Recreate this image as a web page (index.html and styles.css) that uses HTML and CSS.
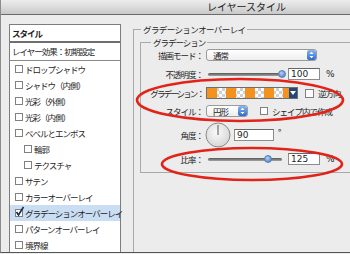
FILE: index.html
```html
<!DOCTYPE html>
<html lang="ja">
<head>
  <meta charset="UTF-8">
  <title>レイヤースタイル</title>
  <link rel="stylesheet" href="styles.css">
</head>
<body>
  <div class="window">
    <div class="titlebar">レイヤースタイル</div>

    <div class="main">
      <div class="styles-panel">
        <div class="panel-head">スタイル</div>
        <div class="panel-default">レイヤー効果：初期設定</div>
        <ul class="effect-list">
          <li><span class="check"></span>ドロップシャドウ</li>
          <li><span class="check"></span>シャドウ（内側）</li>
          <li><span class="check"></span>光彩（外側）</li>
          <li><span class="check"></span>光彩（内側）</li>
          <li><span class="check"></span>ベベルとエンボス</li>
          <li class="sub"><span class="check"></span>輪郭</li>
          <li class="sub"><span class="check"></span>テクスチャ</li>
          <li><span class="check"></span>サテン</li>
          <li><span class="check"></span>カラーオーバーレイ</li>
          <li class="selected">
            <span class="check">
              <svg class="tick" width="10" height="11" viewBox="0 0 10 11"><path d="M1.5 6 L3.5 9 L8.5 1" fill="none" stroke="#1b2a4a" stroke-width="1.6"/></svg>
            </span>グラデーションオーバーレイ
          </li>
          <li><span class="check"></span>パターンオーバーレイ</li>
          <li><span class="check"></span>境界線</li>
        </ul>
      </div>

      <fieldset class="group outer">
        <legend>グラデーションオーバーレイ</legend>
        <fieldset class="group inner">
          <legend>グラデーション</legend>

          <div class="row r1">
            <label>描画モード：</label>
            <div class="select mode">
              通常
              <span class="stepper"><svg width="9" height="10" viewBox="0 0 9 10"><path d="M2.5 4 L4.5 1.8 L6.5 4Z M2.5 6 L4.5 8.2 L6.5 6Z" fill="#fff"/></svg></span>
            </div>
          </div>

          <div class="row r2">
            <label>不透明度：</label>
            <div class="slider"><span class="knob" style="left: 100%"></span></div>
            <span class="field">100</span>
            <span class="unit">%</span>
          </div>

          <div class="row r3">
            <label class="tight">グラデーション：</label>
            <div class="swatch">
              <span class="ramp"></span>
              <span class="drop"><svg width="6" height="4" viewBox="0 0 6 4"><path d="M0 0 H6 L3 4Z" fill="#fff"/></svg></span>
            </div>
            <span class="check big"></span>
            <span class="opt">逆方向</span>
          </div>

          <div class="row r4">
            <label>スタイル：</label>
            <div class="select shape">
              円形
              <span class="stepper"><svg width="9" height="10" viewBox="0 0 9 10"><path d="M2.5 4 L4.5 1.8 L6.5 4Z M2.5 6 L4.5 8.2 L6.5 6Z" fill="#fff"/></svg></span>
            </div>
            <span class="check inset"></span>
            <span class="opt">シェイプ内で作成</span>
          </div>

          <div class="row r5">
            <label>角度：</label>
            <svg class="dial" width="26" height="26" viewBox="0 0 26 26">
              <defs>
                <radialGradient id="dialfill" cx="45%" cy="40%" r="60%">
                  <stop offset="0" stop-color="#fbfbfb"/>
                  <stop offset="1" stop-color="#d6d6d6"/>
                </radialGradient>
              </defs>
              <circle cx="13" cy="13" r="12" fill="url(#dialfill)" stroke="#8a8a8a"/>
              <line x1="13" y1="13" x2="13" y2="3" stroke="#555" stroke-width="1"/>
            </svg>
            <span class="field angle">90</span>
            <span class="deg">°</span>
          </div>

          <div class="row r6">
            <label>比率：</label>
            <div class="slider"><span class="knob" style="left: 81%"></span></div>
            <span class="field">125</span>
            <span class="unit">%</span>
          </div>
        </fieldset>
      </fieldset>
    </div>

    <svg class="marks" width="350" height="254" viewBox="0 0 350 254">
      <ellipse cx="240" cy="100" rx="103" ry="21" fill="none" stroke="#e2231a" stroke-width="2.6"/>
      <ellipse cx="252" cy="164" rx="90" ry="16" fill="none" stroke="#e2231a" stroke-width="2.6"/>
    </svg>
  </div>
</body>
</html>
```

FILE: styles.css
```css
* {
  box-sizing: border-box;
}

body {
  margin: 0;
  width: 350px;
  height: 254px;
  overflow: hidden;
  background: #ececec;
  font-family: "Noto Sans CJK JP", sans-serif;
  font-size: 8.5px;
  letter-spacing: -1px;
  color: #1e1e1e;
}

.window {
  position: relative;
  height: 253px;
  border-left: 1px solid #8c8c8c;
  border-bottom: 1px solid #555;
  background: #ececec;
}

.titlebar {
  height: 15px;
  padding-left: 142px;
  line-height: 14px;
  text-align: center;
  font-size: 10px;
  letter-spacing: 0;
  color: #222;
  background: linear-gradient(#ededed, #c9c9c9);
  border-bottom: 1px solid #6b6b6b;
}

.main {
  display: flex;
  height: 237px;
  padding: 9px 0 0 8px;
}

/* left list */

.styles-panel {
  width: 112px;
  flex-shrink: 0;
  background: #fff;
  border: 1px solid #7d7d7d;
  border-bottom: none;
}

.panel-head {
  height: 18px;
  padding-left: 2px;
  line-height: 16px;
  font-weight: bold;
  border-bottom: 2px solid #6f6f6f;
}

.panel-default {
  height: 18px;
  padding-left: 2px;
  line-height: 17px;
  border-bottom: 1px solid #8a8a8a;
}

.effect-list {
  list-style: none;
  margin: 0;
  padding: 0;
}

.effect-list li {
  display: flex;
  align-items: center;
  height: 16px;
  padding-left: 5px;
  white-space: nowrap;
}

.effect-list li.sub {
  padding-left: 14px;
}

.effect-list li.selected {
  background: #c9ddf3;
}

.check {
  position: relative;
  width: 8px;
  height: 8px;
  margin-right: 2px;
  flex-shrink: 0;
  background: #fff;
  border: 1px solid #808080;
}

.tick {
  position: absolute;
  left: -1px;
  top: -4px;
}

/* right side */

.group {
  margin: 0;
  padding: 0;
  min-width: 0;
  border: 1px solid #a9a9a9;
  border-right: none;
}

.group legend {
  padding: 0 2px;
  line-height: 12px;
}

.outer {
  flex: 1;
  margin: -1px 0 0 12px;
  border-bottom: none;
}

.outer > legend {
  margin-left: 7px;
  letter-spacing: -0.6px;
}

.inner {
  margin: 1px 0 0 6px;
  padding-bottom: 2px;
}

.inner > legend {
  margin-left: 10px;
}

.row {
  display: flex;
  align-items: center;
}

.r1 { height: 14px; }
.r2 { height: 24px; }
.r3 { height: 14px; }
.r4 { height: 22px; }
.r5 { height: 26px; }
.r6 { height: 22px; }

.row label {
  width: 62px;
  flex-shrink: 0;
  text-align: right;
  white-space: nowrap;
}

.row label.tight {
  letter-spacing: -1.9px;
}

.select {
  display: flex;
  align-items: center;
  justify-content: space-between;
  height: 12px;
  margin-left: 3px;
  padding: 0 0 0 6px;
  line-height: 10px;
  background: linear-gradient(#fff, #eeeeee);
  border: 1px solid #9a9a9a;
  border-radius: 3px;
}

.select.mode {
  width: 111px;
}

.select.shape {
  width: 42px;
}

.stepper {
  display: flex;
  width: 9px;
  height: 10px;
  border-radius: 2px;
  background: linear-gradient(#8db6ee, #2d69d0);
}

.slider {
  position: relative;
  width: 74px;
  height: 3px;
  margin-left: 5px;
  border-radius: 2px;
  background: linear-gradient(#575757, #a3a3a3);
}

.knob {
  position: absolute;
  top: -3px;
  width: 8px;
  height: 8px;
  margin-left: -4px;
  border-radius: 50%;
  background: radial-gradient(circle at 40% 35%, #b4d4f7, #3a72c6);
  border: 1px solid #5a7fb0;
}

.field {
  width: 32px;
  height: 12px;
  margin-left: 6px;
  padding-left: 2px;
  font-family: "DejaVu Sans", sans-serif;
  font-size: 9px;
  letter-spacing: 0;
  line-height: 10px;
  background: #fff;
  border: 1px solid #8c8c8c;
  border-top-color: #666;
}

.field.angle {
  width: 40px;
  margin-left: 3px;
}

.unit {
  margin-left: 6px;
  font-family: "DejaVu Sans", sans-serif;
  font-size: 9px;
  letter-spacing: 0;
}

.deg {
  align-self: flex-start;
  margin: 4px 0 0 4px;
  font-size: 9px;
}

.dial {
  margin-left: 2px;
}

.swatch {
  display: flex;
  height: 12px;
  margin-left: 3px;
  border: 1px solid #6e6e6e;
}

.ramp {
  width: 82px;
  background:
    repeating-linear-gradient(90deg, #f3921f 0 10px, transparent 10px 19px),
    repeating-conic-gradient(#cfcfcf 0 25%, #fff 0 50%) 0 0 / 6px 6px;
}

.drop {
  display: flex;
  align-items: center;
  justify-content: center;
  width: 8px;
  background: #264579;
}

.check.big {
  width: 9px;
  height: 9px;
  margin-left: 7px;
}

.check.inset {
  margin-left: 12px;
}

.opt {
  margin-left: 2px;
  white-space: nowrap;
}

.marks {
  position: absolute;
  top: 0;
  left: -1px;
  pointer-events: none;
}
```
